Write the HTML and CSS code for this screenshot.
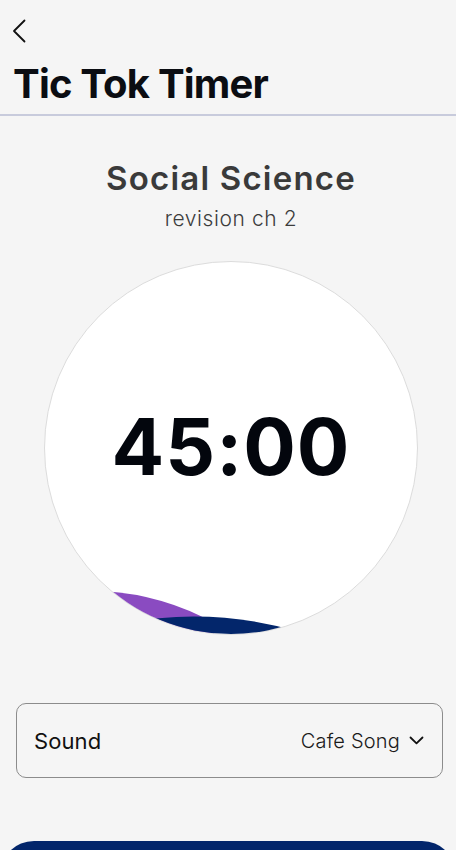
FILE: index.html
```html
<!DOCTYPE html>
<html lang="en">
<head>
<meta charset="utf-8">
<title>Tic Tok Timer</title>
<link rel="stylesheet" href="styles.css">
</head>
<body>
<header class="header">
  <svg class="back" width="14" height="24" viewBox="0 0 14 24"><path d="M12.5 1.5 L2 12 L12.5 22.5" fill="none" stroke="#111" stroke-width="1.8" stroke-linecap="round" stroke-linejoin="round"/></svg>
  <h1 class="title">Tic Tok Timer</h1>
</header>
<main class="main">
  <h2 class="subject">Social Science</h2>
  <p class="topic">revision ch 2</p>
  <div class="dial">
    <svg class="waves" width="372" height="372" viewBox="1 1 372 372">
      <defs><clipPath id="c"><circle cx="187" cy="187" r="186"/></clipPath></defs>
      <g clip-path="url(#c)">
        <path d="M60 330 Q120 334 170 362 L170 400 L0 400 Z" fill="#8a4bc1"/>
        <path d="M80 362 Q170 345 260 372 L260 400 L80 400 Z" fill="#03266b"/>
      </g>
    </svg>
    <div class="time">45:00</div>
  </div>
  <div class="sound">
    <span class="sound-label">Sound</span>
    <span class="sound-value">Cafe Song
      <svg width="15" height="9" viewBox="0 0 15 9"><path d="M1.5 1.5 L7.5 7.3 L13.5 1.5" fill="none" stroke="#111" stroke-width="1.8" stroke-linecap="round" stroke-linejoin="round"/></svg>
    </span>
  </div>
  <button class="start" aria-label="Start"></button>
</main>
</body>
</html>
```

FILE: styles.css
```css
html, body {
  margin: 0;
  padding: 0;
  background: #f5f5f5;
  font-family: Inter, "Noto Sans", sans-serif;
  overflow: hidden;
  height: 850px;
}
.header {
  padding: 19px 0 6px 0;
  border-bottom: 2px solid #c8cbdc;
}
.back {
  display: block;
  margin-left: 12px;
}
.title {
  margin: 17px 0 0 13px;
  font-size: 40px;
  line-height: 48px;
  font-weight: 700;
  color: #0b0d12;
  letter-spacing: -0.8px;
}
.main {
  display: flex;
  flex-direction: column;
}
.subject {
  margin: 42px 0 0 0;
  padding-left: 6px;
  text-align: center;
  font-size: 33px;
  line-height: 40px;
  font-weight: 600;
  color: #3a3a3a;
  letter-spacing: 1.2px;
}
.topic {
  margin: 8px 0 0 0;
  padding-left: 6px;
  text-align: center;
  font-size: 21px;
  line-height: 26px;
  font-weight: 300;
  color: #3c3c3c;
  letter-spacing: 0.6px;
}
.dial {
  position: relative;
  box-sizing: border-box;
  width: 374px;
  height: 374px;
  margin: 29px 0 0 44px;
  border-radius: 50%;
  border: 1px solid #dcdcdc;
  background: #fff;
  display: flex;
  align-items: center;
  justify-content: center;
}
.waves {
  position: absolute;
  left: 0;
  top: 0;
}
.time {
  position: relative;
  font-size: 78px;
  font-weight: 700;
  color: #03060d;
  letter-spacing: 1px;
  margin-top: -4px;
}
.sound {
  box-sizing: border-box;
  height: 75px;
  margin: 68px 13px 0 16px;
  padding: 0 18px 0 17px;
  border: 1px solid #8c8c8c;
  border-radius: 10px;
  display: flex;
  align-items: center;
  justify-content: space-between;
}
.sound-label {
  font-size: 22px;
  color: #111;
  letter-spacing: 0.1px;
}
.sound-value {
  display: flex;
  align-items: center;
  gap: 9px;
  font-size: 20px;
  font-weight: 300;
  color: #1a1a1a;
  letter-spacing: 0.2px;
}
.start {
  margin: 63px 0 0 0;
  height: 70px;
  border: none;
  border-radius: 34px;
  background: #03266b;
}
```
